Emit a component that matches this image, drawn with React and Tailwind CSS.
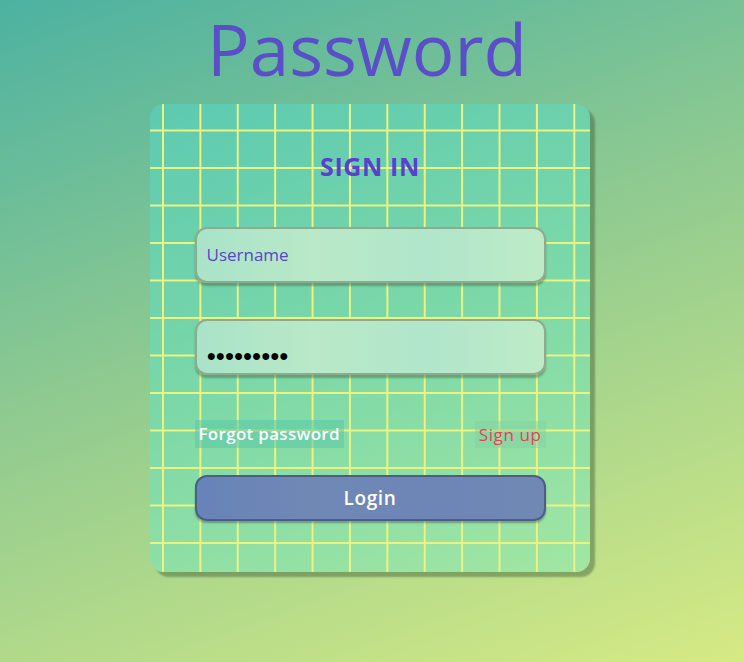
import React from "react";

export default function App() {
  const font = { fontFamily: "'Open Sans', 'Noto Sans', sans-serif" };
  return (
    <div
      className="w-[744px] h-[662px] overflow-hidden flex flex-col items-center bg-[linear-gradient(160deg,#4cb2a1_0%,#8fca90_45%,#d6ea84_100%)]"
      style={font}
    >
      <h1 className="mt-[4px] pr-[10px] h-[92px] text-[71px] leading-[90px] font-normal text-[#5a4fc8]">
        Password
      </h1>
      <div className="mt-[8px] ml-[-4px] w-[440px] h-[468px] rounded-[14px] shadow-[5px_5px_2px_rgba(60,90,50,0.45)] bg-[linear-gradient(160deg,#5ccab1_0%,#7cd8a8_50%,#a2e6a2_100%)] relative overflow-hidden">
        <div className="absolute inset-0 bg-[linear-gradient(to_right,#eef27e_2px,transparent_2px),linear-gradient(to_bottom,#eef27e_2px,transparent_2px)] bg-[length:37.4px_37.5px] bg-[position:12px_25.5px]" />
        <div className="relative flex flex-col items-center">
          <h2 className="mt-[46px] h-[32px] text-[25px] leading-[32px] font-bold text-[#5a3fd0] tracking-[0.6px]">
            SIGN IN
          </h2>
          <div className="mt-[45px] w-[351px] h-[56px] rounded-[12px] border-2 border-[#8faa8e] bg-[linear-gradient(90deg,#a9e3c9,#b9e9c7,#b1e6cc,#bdebc6)] shadow-[0_3px_2px_rgba(60,100,60,0.45)] flex items-center px-[10px]">
            <span className="text-[17px] text-[#5845c6]">Username</span>
          </div>
          <div className="mt-[36px] w-[351px] h-[56px] rounded-[12px] border-2 border-[#8faa8e] bg-[linear-gradient(90deg,#a9e3c9,#b9e9c7,#b1e6cc,#bdebc6)] shadow-[0_3px_2px_rgba(60,100,60,0.45)] flex items-end pb-[10px] px-[10px]">
            <span className="text-[16px] leading-[16px] text-black tracking-[-0.6px]">●●●●●●●●●</span>
          </div>
          <div className="mt-[44px] w-[351px] flex justify-between items-center">
            <span className="h-[28px] px-[4px] flex items-center bg-[rgba(90,200,170,0.55)] text-white font-semibold text-[17px] tracking-[0.3px]">
              Forgot password
            </span>
            <span className="h-[27px] px-[4px] mt-[2px] flex items-center bg-[rgba(130,210,160,0.5)] text-[#e6405a] text-[17px] tracking-[0.6px]">
              Sign up
            </span>
          </div>
          <button className="mt-[27px] w-[351px] h-[46px] rounded-[12px] border-2 border-[#4d5d86] bg-[linear-gradient(90deg,#6783b8,#7088b4,#6e86b6,#7088b3)] shadow-[0_2px_2px_rgba(40,60,60,0.4)] text-white font-semibold text-[19px] tracking-[0.6px]">
            Login
          </button>
        </div>
      </div>
    </div>
  );
}
